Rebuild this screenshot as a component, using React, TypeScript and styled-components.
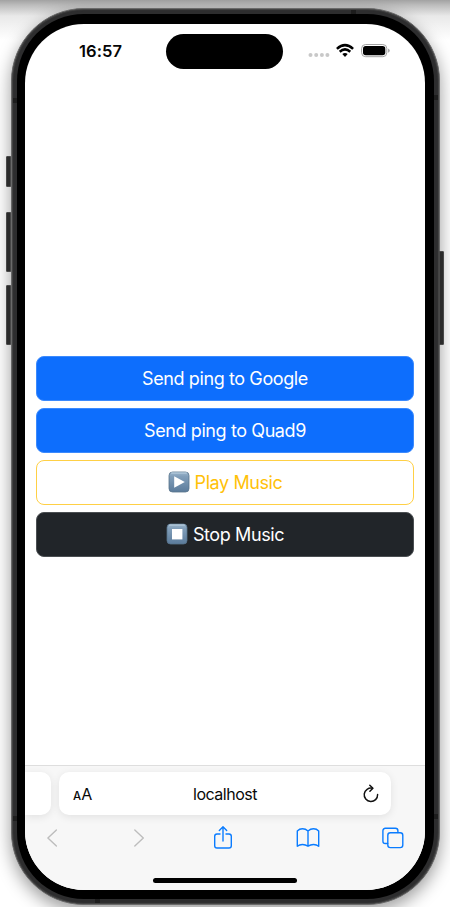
import React from "react";
import styled, { createGlobalStyle } from "styled-components";

const GlobalStyle = createGlobalStyle`
  * { box-sizing: border-box; }
  html, body { margin: 0; padding: 0; overflow: hidden; }
  body { font-family: Inter, "Liberation Sans", sans-serif; background: #fff; }
  button { font: inherit; }
`;

const Desktop = styled.main`
  width: 450px;
  height: 907px;
  overflow: hidden;
  padding: 8px 0 0 11px;
  background: linear-gradient(#a2a2a2, #bcbcbc 5px, rgba(218, 218, 218, 0.6) 16px, rgba(255, 255, 255, 0) 40px), #fff;
`;

const Phone = styled.div`
  position: relative;
  width: 429px;
  height: 897px;
  padding: 5px;
  border: 1px solid #6a6a6a;
  border-radius: 73px;
  background: #2d2d2e;
  box-shadow: inset 0 0 1px 1px #464646, 0 6px 17px 0 rgba(0, 0, 0, 0.4);
`;

const SideKey = styled.i<{ $top: number; $height: number; $right?: boolean }>`
  position: absolute;
  top: ${(p) => p.$top}px;
  ${(p) => (p.$right ? "right: -5px;" : "left: -6px;")}
  width: 5px;
  height: ${(p) => p.$height}px;
  border-radius: ${(p) => (p.$right ? "0 1px 1px 0" : "1px 0 0 1px")};
  border: 1px solid #484848;
  background: #2b2b2b;
`;

const Antenna = styled.i<{ $x: number; $y: number; $flat?: boolean }>`
  position: absolute;
  left: ${(p) => p.$x}px;
  top: ${(p) => p.$y}px;
  width: ${(p) => (p.$flat ? 5 : 4)}px;
  height: ${(p) => (p.$flat ? 4 : 5)}px;
  background: #1d1d1d;
`;

const Bezel = styled.div`
  height: 100%;
  padding: 10px 9px 9px 8px;
  border-radius: 67px;
  background: #000;
`;

const Screen = styled.div`
  height: 866px;
  display: flex;
  flex-direction: column;
  overflow: hidden;
  border-radius: 59px;
  background: #fff;
`;

const StatusBar = styled.header`
  display: grid;
  grid-template-columns: 141px 117px 1fr;
  height: 44px;
  padding-top: 10px;
`;

const Clock = styled.time`
  padding: 7px 0 0 54px;
  font-size: 16.5px;
  line-height: 20px;
  font-weight: 600;
  letter-spacing: 0.1px;
  color: #050505;
`;

const Island = styled.div`
  height: 34.5px;
  border-radius: 18px;
  background: #000;
`;

const Indicators = styled.div`
  display: flex;
  align-items: flex-start;
  padding: 8px 0 0 25px;
`;

const Content = styled.section`
  flex: 1;
  display: flex;
  flex-direction: column;
  justify-content: center;
  gap: 7px;
  padding: 78px 11px 0;
  margin-bottom: -1px;
`;

type Tone = "primary" | "outline" | "dark";
const tones: Record<Tone, string> = {
  primary: "background:#0d6efd;color:#fff;border-color:#3c8afd;",
  outline: "background:#fff;color:#ffc107;border-color:#ffd045;",
  dark: "background:#212529;color:#fff;border-color:#4b4f52;",
};

const ActionButton = styled.button<{ $tone: Tone }>`
  display: flex;
  align-items: center;
  justify-content: center;
  gap: 5px;
  height: 45px;
  padding: 0;
  border: 1px solid;
  border-radius: 8px;
  font-size: 18px;
  letter-spacing: -0.4px;
  ${(p) => tones[p.$tone]}
`;

const BrowserBar = styled.footer`
  height: 125px;
  border-top: 1px solid #dedede;
  background: #f7f7f7;
`;

const TabStrip = styled.div`
  display: flex;
  gap: 8px;
  height: 49px;
  padding-top: 6px;
`;

const PreviousTab = styled.div`
  width: 26px;
  height: 43px;
  border-radius: 0 10px 10px 0;
  background: #fff;
  box-shadow: 0 2px 8px rgba(0, 0, 0, 0.09);
`;

const AddressField = styled.div`
  display: grid;
  grid-template-columns: 50px 1fr 50px;
  align-items: center;
  width: 332px;
  height: 43px;
  border-radius: 10px;
  background: #fff;
  box-shadow: 0 2px 8px rgba(0, 0, 0, 0.09);
  color: #080808;
  svg { justify-self: end; margin-right: 11px; }
`;

const TextSize = styled.span`
  padding-left: 14px;
  font-size: 16px;
  white-space: nowrap;
  small { font-size: 11.5px; font-weight: 500; }
`;

const Address = styled.span`
  text-align: center;
  font-size: 16px;
  letter-spacing: -0.5px;
`;

const Tools = styled.nav`
  display: flex;
  justify-content: space-between;
  align-items: center;
  height: 45px;
  padding: 0 20px 0 15px;
`;

const HomeIndicator = styled.div`
  width: 144px;
  height: 5px;
  margin: 18px auto 0;
  border-radius: 3px;
  background: #000;
`;

const StatusIcons = () => (
  <svg width="84" height="18" viewBox="0 0 84 18">
    <g fill="#c8c8c8">
      {[2.5, 8.2, 13.9, 19.4].map((x) => <circle key={x} cx={x} cy="13" r="2" />)}
    </g>
    <g fill="none" stroke="#000" strokeWidth="2.5">
      <path d="M28.9 6.9Q37 -.7 45.1 6.9" />
      <path d="M31.7 9.8Q37 5 42.3 9.8" />
    </g>
    <path d="M34.3 12.1Q37 9.9 39.7 12.1L37 14.9Z" />
    <rect x="53.6" y="2.5" width="25.2" height="12.2" rx="4" fill="none" stroke="#a2a2a2" />
    <rect x="55" y="4" width="22.3" height="9.2" rx="2.7" />
    <path d="M80.2 6.5q3 2.1 0 4.2Z" fill="#999" />
  </svg>
);

const KeycapIcon = ({ kind }: { kind: "play" | "stop" }) => (
  <svg width="22" height="22" viewBox="0 0 22 22">
    <defs>
      <linearGradient id={`cap-${kind}`} x2="0" y2="1">
        <stop stopColor="#9bb6cc" /><stop offset=".22" stopColor="#829fba" /><stop offset="1" stopColor="#5b7b9b" />
      </linearGradient>
    </defs>
    <rect x="1" y="1" width="20" height="20" rx="3.5" fill={`url(#cap-${kind})`} stroke="#58738c" strokeWidth=".8" />
    <path d="M3.5 2H18.5" stroke="#bdd2e2" strokeWidth="1" strokeLinecap="round" />
    {kind === "play" ? <path d="M6.2 5.3L16.8 11L6.2 16.7Z" fill="#fff" /> : <rect x="6" y="6" width="10.4" height="10.4" fill="#fff" />}
  </svg>
);

const Reload = () => (
  <svg width="18" height="20" viewBox="0 0 18 20" fill="none" stroke="#111" strokeWidth="1.5" strokeLinecap="round" strokeLinejoin="round">
    <path d="M10.4 4.3A6.7 6.7 0 1 0 15.6 10.6" /><path d="M7.8 1.3L10.9 4.3L7.9 7.3" />
  </svg>
);

const Arrow = ({ forward = false }: { forward?: boolean }) => (
  <svg width="24" height="24" viewBox="0 0 24 24" fill="none" stroke="#bdbdbd" strokeWidth="1.4" strokeLinecap="round" strokeLinejoin="round">
    <path d={forward ? "M9.8 4L18.3 12L9.8 20" : "M16.4 4L7.9 12L16.4 20"} />
  </svg>
);

const ToolIcon = ({ kind }: { kind: "share" | "book" | "tabs" }) => (
  <svg width="24" height="26" viewBox="0 0 24 26" fill="none" stroke="#0a7cff" strokeWidth="1.4" strokeLinecap="round" strokeLinejoin="round">
    {kind === "share" && <><path d="M9 9H6Q3.7 9 3.7 11.3V20.7Q3.7 23 6 23H18Q20.3 23 20.3 20.7V11.3Q20.3 9 18 9H15" /><path d="M12 16V2M8.3 5.5L12 1.8L15.7 5.5" /></>}
    {kind === "book" && <path d="M12 6Q9.5 3.8 6.5 3.8Q3.4 3.8 1.3 6V21.2Q3.4 19.5 6.5 19.5Q9.5 19.5 12 21.2Q14.5 19.5 17.5 19.5Q20.6 19.5 22.7 21.2V6Q20.6 3.8 17.5 3.8Q14.5 3.8 12 6V21" />}
    {kind === "tabs" && <><rect x="6.8" y="7.8" width="15" height="14.8" rx="2.6" /><path d="M6.7 18.5H4.4Q1.9 18.5 1.9 16V5.8Q1.9 3.3 4.4 3.3H14.4Q16.9 3.3 16.9 5.8V7.5" /></>}
  </svg>
);

export default function App() {
  return (
    <>
      <GlobalStyle />
      <Desktop>
        <Phone>
          <SideKey $top={147} $height={31} />
          <SideKey $top={203} $height={60} />
          <SideKey $top={276} $height={60} />
          <SideKey $top={242} $height={94} $right />
          <Antenna $x={339} $y={1} $flat />
          <Antenna $x={83} $y={890} $flat />
          <Antenna $x={1} $y={89} />
          <Antenna $x={422} $y={86} />
          <Antenna $x={1} $y={807} />
          <Antenna $x={422} $y={805} />
          <Bezel>
            <Screen>
              <StatusBar>
                <Clock>16:57</Clock>
                <Island />
                <Indicators><StatusIcons /></Indicators>
              </StatusBar>
              <Content>
                <ActionButton $tone="primary">Send ping to Google</ActionButton>
                <ActionButton $tone="primary">Send ping to Quad9</ActionButton>
                <ActionButton $tone="outline"><KeycapIcon kind="play" />Play Music</ActionButton>
                <ActionButton $tone="dark"><KeycapIcon kind="stop" />Stop Music</ActionButton>
              </Content>
              <BrowserBar>
                <TabStrip>
                  <PreviousTab />
                  <AddressField>
                    <TextSize><small>A</small>A</TextSize>
                    <Address>localhost</Address>
                    <Reload />
                  </AddressField>
                </TabStrip>
                <Tools>
                  <Arrow /><Arrow forward />
                  <ToolIcon kind="share" /><ToolIcon kind="book" /><ToolIcon kind="tabs" />
                </Tools>
                <HomeIndicator />
              </BrowserBar>
            </Screen>
          </Bezel>
        </Phone>
      </Desktop>
    </>
  );
}
